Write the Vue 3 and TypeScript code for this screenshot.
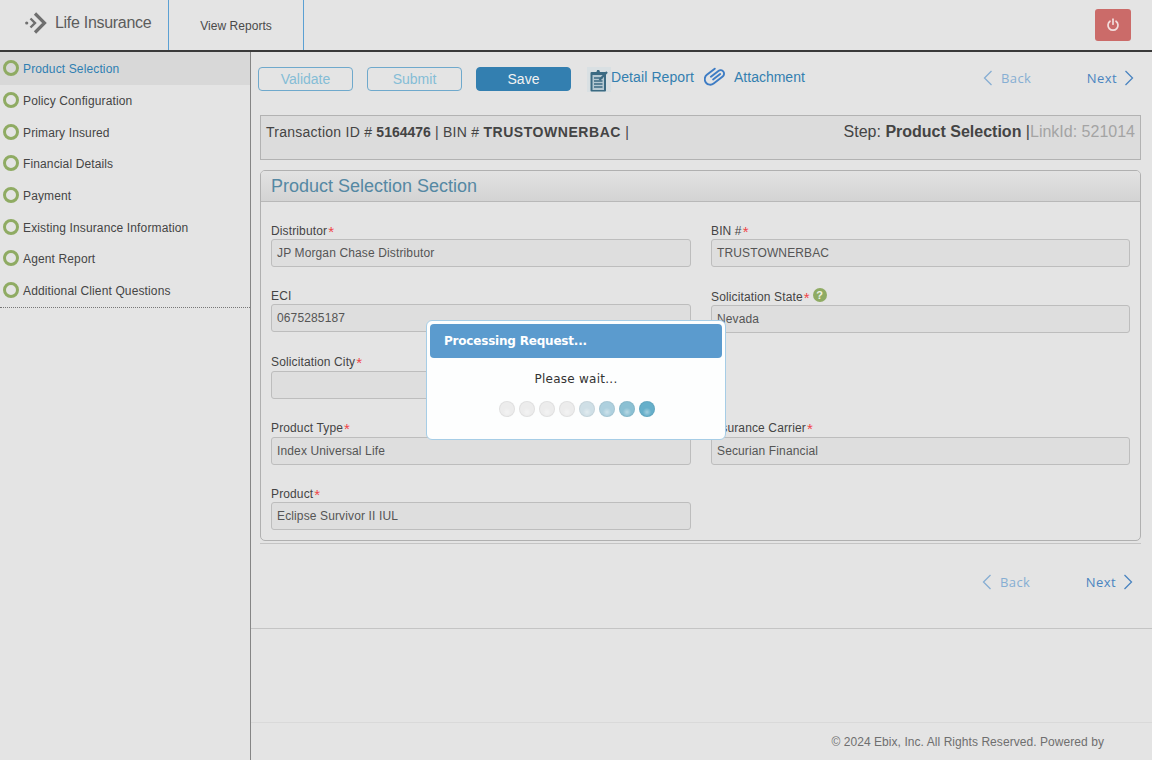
<template>
  <div class="page">
    <header class="topbar">
      <div class="brand">
        <svg class="logo" width="23" height="24" viewBox="0 0 23 24" fill="none" stroke="#6f6f6f" stroke-width="3.2">
          <path d="M10 2.500l9.500 9.500-9.500 9.500" />
          <path d="M5.500 7.500l4.500 4.500-4.500 4.500" stroke-width="2.400" />
          <circle cx="1.700" cy="12" r="1.600" fill="#6f6f6f" stroke="none" />
        </svg>
        <span>Life Insurance</span>
      </div>
      <a class="top-link">View Reports</a>
      <button class="power" aria-label="Log out">
        <svg width="14" height="14" viewBox="0 0 14 14" fill="none" stroke="#f3dedd" stroke-width="1.700" stroke-linecap="round">
          <path d="M7 1.200v5" />
          <path d="M4 3.200a5 5 0 1 0 6 0" />
        </svg>
      </button>
    </header>

    <div class="body">
      <nav class="sidebar">
        <ul>
          <li v-for="(step, i) in steps" :key="step" :class="{ active: i === 0 }">
            <span class="ring"></span><span class="step-name">{{ step }}</span>
          </li>
        </ul>
      </nav>

      <main class="main">
        <div class="toolbar">
          <button class="btn ghost">Validate</button>
          <button class="btn ghost">Submit</button>
          <button class="btn solid">Save</button>
          <a class="tool report">
            <span class="clip-box">
              <svg width="20" height="24" viewBox="0 0 20 24">
                <rect x="1.500" y="4" width="15.500" height="19.500" rx="1" fill="#3b6a82" />
                <rect x="3.500" y="7" width="11.500" height="15" fill="#b4c8d2" />
                <path d="M5 10h8.500M5 13h8.500M5 16h8.500M5 19h8.500" stroke="#3b6a82" stroke-width="1.300" />
                <path d="M5 6.500V4.500h2.200l1-2.500h2l1 2.500h2.200v2z" fill="#3b6a82" />
                <path d="M10.500 12l7.500-8" stroke="#3b6a82" stroke-width="2.200" />
              </svg>
            </span>
            Detail Report
          </a>
          <a class="tool attach">
            <svg width="21" height="20" viewBox="0 0 21 20" fill="none" stroke="#3d7cc4" stroke-width="1.900" stroke-linecap="round">
              <g transform="translate(10.500 9.500) rotate(52) translate(-7.500 -12)">
                <path d="M5.500 15V5.500a3.500 3.500 0 0 1 7 0V17a5.500 5.500 0 0 1-11 0V7" />
                <path d="M9 6v9" />
              </g>
            </svg>
            <span>Attachment</span>
          </a>
          <div class="pager">
            <a class="back">
              <svg width="10" height="16" viewBox="0 0 10 16" fill="none" stroke="currentColor" stroke-width="1.300"><path d="M8.500 1L1.500 8l7 7" /></svg>
              Back
            </a>
            <a class="next">
              Next
              <svg width="10" height="16" viewBox="0 0 10 16" fill="none" stroke="currentColor" stroke-width="1.300"><path d="M1.500 1l7 7-7 7" /></svg>
            </a>
          </div>
        </div>

        <div class="infobar">
          <div class="ids">Transaction ID # <b class="num">5164476</b> | BIN # <b class="bin">TRUSTOWNERBAC</b> |</div>
          <div class="step">Step: <b>Product Selection</b> |<span class="link-id">LinkId: 521014</span></div>
        </div>

        <section class="panel">
          <h2>Product Selection Section</h2>
          <div class="form">
            <div v-for="f in fields" :key="f.label" class="field" :class="{ shift: f.shift, start: f.start, low: f.low }">
              <label>
                {{ f.label }}<span v-if="f.required" class="req">*</span>
                <span v-if="f.help" class="help">?</span>
              </label>
              <div class="value">{{ f.value }}</div>
            </div>
          </div>
        </section>
        <hr class="rule" />

        <div class="pager bottom">
          <a class="back">
            <svg width="10" height="16" viewBox="0 0 10 16" fill="none" stroke="currentColor" stroke-width="1.300"><path d="M8.500 1L1.500 8l7 7" /></svg>
            Back
          </a>
          <a class="next">
            Next
            <svg width="10" height="16" viewBox="0 0 10 16" fill="none" stroke="currentColor" stroke-width="1.300"><path d="M1.500 1l7 7-7 7" /></svg>
          </a>
        </div>

        <div class="spacer"></div>
        <footer class="footer">© 2024 Ebix, Inc. All Rights Reserved. Powered by</footer>
      </main>
    </div>

    <div class="dialog">
      <div class="dialog-head">Processing Request...</div>
      <p>Please wait...</p>
      <div class="dots">
        <span v-for="(c, i) in dotColors" :key="i" class="dot" :style="{ backgroundColor: c }"></span>
      </div>
    </div>
  </div>
</template>

<script setup lang="ts">
interface Field {
  label: string
  value: string
  required?: boolean
  help?: boolean
  shift?: boolean
  start?: boolean
  low?: boolean
}

const steps = [
  'Product Selection',
  'Policy Configuration',
  'Primary Insured',
  'Financial Details',
  'Payment',
  'Existing Insurance Information',
  'Agent Report',
  'Additional Client Questions',
]

const fields: Field[] = [
  { label: 'Distributor', value: 'JP Morgan Chase Distributor', required: true },
  { label: 'BIN #', value: 'TRUSTOWNERBAC', required: true },
  { label: 'ECI', value: '0675285187' },
  { label: 'Solicitation State', value: 'Nevada', required: true, help: true, shift: true },
  { label: 'Solicitation City', value: '', required: true, start: true, low: true },
  { label: 'Product Type', value: 'Index Universal Life', required: true, start: true, low: true },
  { label: 'Insurance Carrier', value: 'Securian Financial', required: true, low: true },
  { label: 'Product', value: 'Eclipse Survivor II IUL', required: true, start: true },
]

const dotColors = ['#ececec', '#ececec', '#ececec', '#ececec', '#cfdfe6', '#aed0de', '#8bc0d3', '#66afca']
</script>

<style>
html,
body {
  margin: 0;
  background: #e4e4e4;
}
</style>

<style scoped>
.page {
  position: relative;
  width: 1152px;
  height: 760px;
  overflow: hidden;
  display: flex;
  flex-direction: column;
  background: #e4e4e4;
  color: #3f3f3f;
  font-family: "Liberation Sans", Arial, sans-serif;
  font-size: 12px;
  letter-spacing: 0.13px;
}

.topbar {
  flex: none;
  box-sizing: border-box;
  height: 52px;
  display: flex;
  align-items: stretch;
  border-bottom: 2px solid #3a3a3a;
}

.brand {
  box-sizing: border-box;
  width: 168px;
  padding-left: 25px;
  display: flex;
  align-items: center;
  gap: 7px;
  font-size: 16px;
  color: #5c5c5c;
  letter-spacing: -0.3px;
  padding-bottom: 5px;
}

.logo {
  flex: none;
}

.top-link {
  box-sizing: border-box;
  width: 136px;
  display: flex;
  align-items: center;
  justify-content: center;
  border-left: 1px solid #5ba0d3;
  border-right: 1px solid #5ba0d3;
  color: #4a4a4a;
  letter-spacing: 0.05px;
  padding-top: 1px;
}

.power {
  margin: 9px 21px 0 auto;
  width: 36px;
  height: 32px;
  padding: 0;
  display: flex;
  align-items: center;
  justify-content: center;
  background: #cb6b69;
  border: none;
  border-radius: 3px;
}

.body {
  flex: 1;
  display: flex;
  min-height: 0;
}

.sidebar {
  flex: none;
  width: 250px;
  border-right: 1px solid #858585;
}

.sidebar ul {
  margin: 0;
  padding: 0 0 1px;
  list-style: none;
  border-bottom: 1px dotted #777;
  height: 254px;
}

.sidebar li {
  height: 31.700px;
  display: flex;
  align-items: center;
  gap: 4px;
  padding: 0 3px 1px;
  box-sizing: border-box;
  color: #454545;
}

.sidebar li.active {
  background: #d8d8d8;
  color: #2f7fb2;
  height: 32.500px;
}

.step-name {
  padding-top: 2px;
}

.ring {
  box-sizing: border-box;
  width: 16px;
  height: 16px;
  border: 3px solid #8fab63;
  border-radius: 50%;
}

.main {
  flex: 1;
  min-width: 0;
  display: flex;
  flex-direction: column;
}

.toolbar {
  height: 63px;
  flex: none;
  display: flex;
  align-items: flex-start;
  padding: 15px 0 0 7px;
  box-sizing: border-box;
}

.btn {
  box-sizing: border-box;
  width: 95px;
  height: 24px;
  margin-right: 14px;
  padding: 0;
  font-family: inherit;
  font-size: 14px;
  border-radius: 4px;
}

.ghost {
  background: transparent;
  border: 1px solid #6fa9cc;
  color: #85bdd6;
}

.solid {
  background: #337fb0;
  border: 1px solid #337fb0;
  color: #f2f2f2;
}

.tool {
  display: flex;
  align-items: flex-start;
  font-size: 14px;
  color: #337fb0;
  white-space: nowrap;
}

.report {
  margin-left: 2px;
  line-height: 20px;
  letter-spacing: 0.1px;
}

.clip-box {
  width: 24px;
  height: 25px;
  display: flex;
  align-items: center;
  justify-content: center;
  background: #d9e0e3;
}

.attach {
  margin-left: 10px;
  gap: 9px;
  line-height: 20px;
  letter-spacing: 0;
}

.pager {
  margin-left: auto;
  width: 151px;
  padding-right: 18px;
  display: flex;
  justify-content: space-between;
  font-family: "Open Sans", sans-serif;
  font-size: 13px;
  letter-spacing: 0.4px;
  padding-top: 2px;
}

.pager a {
  display: flex;
  align-items: center;
  gap: 8px;
}

.pager .next {
  gap: 7px;
}

.back {
  color: #86aed3;
}

.next {
  color: #4a84c0;
}

.infobar {
  flex: none;
  box-sizing: border-box;
  width: 881px;
  height: 45px;
  margin-left: 9px;
  padding: 7px 5px 0;
  display: flex;
  justify-content: space-between;
  align-items: flex-start;
  background: #dcdcdc;
  border: 1px solid #b2b2b2;
  font-size: 14px;
  line-height: 18px;
  color: #444;
  letter-spacing: 0;
}

.ids {
  letter-spacing: 0.25px;
}

.num {
  letter-spacing: 0;
}

.bin {
  letter-spacing: 0.55px;
}

.step {
  font-size: 16px;
}

.link-id {
  color: #a4a4a4;
}

.panel {
  flex: none;
  box-sizing: border-box;
  width: 881px;
  height: 371px;
  margin: 10px 0 0 9px;
  border: 1px solid #b0b0b0;
  border-radius: 5px;
  overflow: hidden;
}

.panel h2 {
  box-sizing: border-box;
  height: 31px;
  margin: 0;
  padding: 5px 10px 0;
  font-size: 18px;
  line-height: 21px;
  font-weight: 400;
  letter-spacing: 0;
  color: #5588a3;
  background: linear-gradient(#e2e2e2, #d3d3d3);
  border-bottom: 1px solid #b8b8b8;
}

.form {
  display: grid;
  grid-template-columns: 420px 419px;
  grid-template-rows: 65px 66px 66px 66px 66px;
  column-gap: 20px;
  padding: 21px 10px 0;
}

.field {
  min-width: 0;
}

.field.start {
  grid-column: 1;
}

.field.shift {
  padding-top: 1px;
}

.field.low .value {
  margin-top: 1px;
}

.field label {
  display: flex;
  align-items: flex-start;
  height: 16px;
  line-height: 16px;
  color: #444;
}

.req {
  margin: 1px 0 0 1px;
  color: #f04548;
  font-size: 15px;
  line-height: 15px;
}

.help {
  width: 14px;
  height: 14px;
  margin: -1px 0 0 3px;
  border-radius: 50%;
  background: #8fab63;
  color: #eef2e6;
  font-size: 11px;
  font-weight: 700;
  line-height: 14px;
  text-align: center;
}

.value {
  box-sizing: border-box;
  height: 28px;
  padding: 0 5px;
  line-height: 26px;
  background: #dedede;
  border: 1px solid #bdbdbd;
  border-radius: 3px;
  color: #555;
}

.rule {
  flex: none;
  box-sizing: border-box;
  width: 881px;
  height: 1px;
  margin: 2px 0 0 9px;
  border: none;
  background: #c4c4c4;
}

.pager.bottom {
  flex: none;
  box-sizing: border-box;
  height: 84px;
  margin-left: 731px;
  padding: 29px 0 0;
  width: 151px;
  align-items: flex-start;
}

.spacer {
  flex: none;
  box-sizing: border-box;
  height: 95px;
  border-top: 1px solid #c4c4c4;
  border-bottom: 1px solid #d9d9d9;
}

.footer {
  flex: 1;
  padding: 12px 48px 0 0;
  text-align: right;
  color: #6f6f6f;
  letter-spacing: 0.06px;
}

.dialog {
  position: absolute;
  left: 426px;
  top: 320px;
  box-sizing: border-box;
  width: 300px;
  height: 120px;
  padding: 3px;
  background: #fdfefe;
  border: 1px solid #a6cde6;
  border-radius: 6px;
  font-family: "DejaVu Sans", sans-serif;
  text-align: center;
  color: #333;
}

.dialog-head {
  box-sizing: border-box;
  height: 34px;
  padding-left: 14px;
  background: #5b9bce;
  border-radius: 4px;
  color: #fff;
  font-size: 12px;
  font-weight: 700;
  line-height: 35px;
  text-align: left;
  letter-spacing: -0.2px;
}

.dialog p {
  margin: 14px 0 0;
  font-size: 12px;
  line-height: 15px;
  letter-spacing: 0.25px;
}

.dots {
  display: flex;
  justify-content: center;
  gap: 4px;
  margin: 14px 0 0 1px;
}

.dot {
  box-sizing: border-box;
  width: 16px;
  height: 16px;
  border-radius: 50%;
  border: 1px solid rgba(0, 0, 0, 0.05);
  background-image: radial-gradient(circle at 50% 72%, rgba(255, 255, 255, 0.4), rgba(255, 255, 255, 0) 35%);
}
</style>
